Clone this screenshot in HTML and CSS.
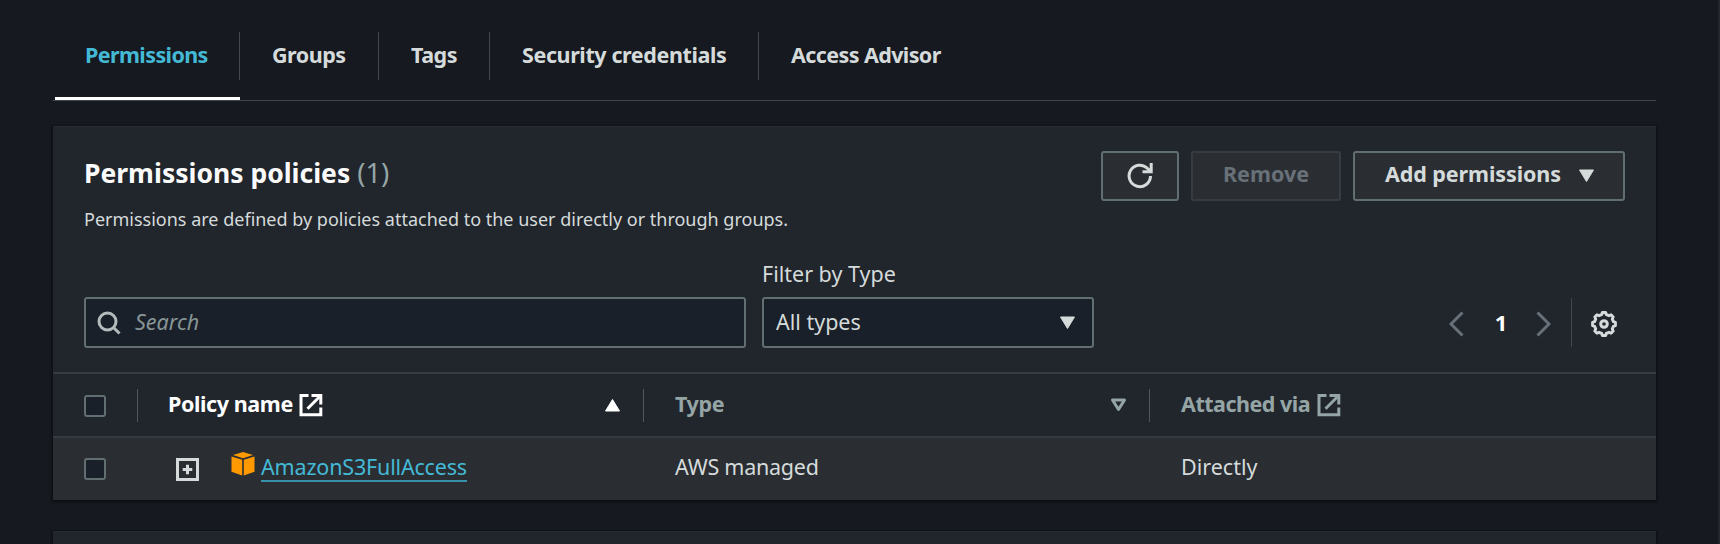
FILE: index.html
```html
<!DOCTYPE html>
<html lang="en">
<head>
<meta charset="utf-8">
<title>Permissions</title>
<link rel="stylesheet" href="styles.css">
</head>
<body>
<main class="page">
  <nav class="tabs">
    <a class="tab tab-active"><span class="ls-7">Permissions</span></a>
    <a class="tab"><span class="ls-5">Groups</span></a>
    <a class="tab"><span class="ls-5">Tags</span></a>
    <a class="tab"><span class="ls-4">Security credentials</span></a>
    <a class="tab"><span class="ls-6">Access Advisor</span></a>
  </nav>

  <section class="panel">
    <header class="panel-head">
      <div class="headings">
        <h2 class="title">Permissions policies <span class="count">(1)</span></h2>
        <p class="description">Permissions are defined by policies attached to the user directly or through groups.</p>
      </div>
      <div class="actions">
        <button class="btn btn-icon" aria-label="Refresh">
          <svg width="26" height="26" viewBox="0 0 26 26" fill="none" stroke="currentColor" stroke-width="3"><path d="M23.500 13A10.700 10.700 0 1 1 20.300 5.300L23 8"/><path d="M24.200 0V8.700H15.500"/><path d="M19.500 8.500L24 4v4.500z" fill="currentColor" stroke="none"/></svg>
        </button>
        <button class="btn btn-disabled">Remove</button>
        <button class="btn btn-menu">Add permissions
          <svg class="caret" width="17" height="14" viewBox="0 0 17 14"><path d="M1.500 1h14L8.500 12.500z" fill="currentColor" stroke="currentColor" stroke-linejoin="round"/></svg>
        </button>
      </div>
    </header>

    <div class="filters">
      <div class="search">
        <svg width="24" height="24" viewBox="0 0 24 24" fill="none" stroke="currentColor" stroke-width="3"><circle cx="10.500" cy="10.500" r="8.500"/><path d="M16.500 16.500l6 6"/></svg>
        <span class="placeholder">Search</span>
      </div>
      <div class="filter">
        <label class="filter-label">Filter by Type</label>
        <div class="select"><span>All types</span>
          <svg width="17" height="14" viewBox="0 0 17 14"><path d="M1.500 1h14L8.500 12.500z" fill="currentColor" stroke="currentColor" stroke-linejoin="round"/></svg>
        </div>
      </div>
      <div class="pager">
        <svg class="chevron" width="15" height="26" viewBox="0 0 15 26" fill="none" stroke="currentColor" stroke-width="3"><path d="M13.500 1.500L2 13l11.500 11.500"/></svg>
        <span class="page-number">1</span>
        <svg class="chevron" width="15" height="26" viewBox="0 0 15 26" fill="none" stroke="currentColor" stroke-width="3"><path d="M1.500 1.500L13 13 1.500 24.500"/></svg>
        <span class="pager-divider"></span>
        <svg class="gear" width="26" height="26" viewBox="0 0 26 26" fill="none" stroke="currentColor" stroke-width="3" stroke-linejoin="round"><path d="M10.700 3.600L11.400 1.600h3.200l.7 2L18 4.700l2-.9 2.200 2.200-.9 2 1.100 2.700 2 .7v3.200l-2 .7-1.100 2.700.9 2-2.200 2.200-2-.9-2.700 1.100-.7 2h-3.200l-.7-2L8 21.300l-2 .9L3.800 20l.9-2-1.100-2.700-2-.7v-3.200l2-.7L4.700 8l-.9-2L6 3.800l2 .9z"/><circle cx="13" cy="13" r="3.300"/></svg>
      </div>
    </div>

    <div class="table">
      <div class="row row-head">
        <div class="cell cell-check"><span class="checkbox"></span></div>
        <div class="cell cell-name sorted"><span class="ls-4">Policy name</span>
          <svg class="external" width="24" height="24" viewBox="0 0 24 24" fill="none" stroke="currentColor" stroke-width="3"><path d="M9.500 2.500H2v19.300h19.800V14.500"/><path d="M12.500 2.500h9.300v9"/><path d="M21.500 2.700L8.500 15.700"/></svg>
          <svg class="sort" width="17" height="14" viewBox="0 0 17 14"><path d="M1.500 13h14L8.500 1.500z" fill="currentColor" stroke="currentColor" stroke-linejoin="round"/></svg>
        </div>
        <div class="cell cell-type"><span class="type-label ls-4">Type</span>
          <svg class="sort" width="17" height="14" viewBox="0 0 17 14" fill="none" stroke="currentColor" stroke-width="3" stroke-linejoin="round"><path d="M2.500 2h12L8.500 11.500z"/></svg>
        </div>
        <div class="cell cell-via"><span class="ls-5">Attached via</span>
          <svg class="external external-via" width="24" height="24" viewBox="0 0 24 24" fill="none" stroke="currentColor" stroke-width="3"><path d="M9.500 2.500H2v19.300h19.800V14.500"/><path d="M12.500 2.500h9.300v9"/><path d="M21.500 2.700L8.500 15.700"/></svg>
        </div>
      </div>
      <div class="row row-body">
        <div class="cell cell-check"><span class="checkbox"></span></div>
        <div class="cell cell-name">
          <svg class="expander" width="23" height="23" viewBox="0 0 23 23" fill="none" stroke="currentColor" stroke-width="3"><rect x="1.500" y="1.500" width="20" height="20"/><path d="M11.500 6.700v9.600M6.700 11.500h9.600"/></svg>
          <svg class="cube" width="24" height="24" viewBox="0 0 24 24" fill="#ff9900"><path d="M12 0l10 3.100L12 6.200 2 3.100z"/><path d="M.5 4.600l10.700 3.200V23.600L.5 19.800zM23.500 4.600L12.800 7.800v15.800l10.700-3.800z"/></svg>
          <a class="policy-link">AmazonS3FullAccess</a>
        </div>
        <div class="cell cell-type"><span class="ls-2">AWS managed</span></div>
        <div class="cell cell-via"><span>Directly</span></div>
      </div>
    </div>
  </section>

  <section class="panel panel-next"></section>
</main>
</body>
</html>
```
FILE: styles.css
```css
* { box-sizing: border-box; }
html { background: #16191f; }
body {
  margin: 0;
  height: 544px;
  background: #16191f;
  color: #d5dbdb;
  font: 21.5px/44px "Noto Sans", "Open Sans", sans-serif;
}
svg { display: block; flex: none; }
.page {
  height: 544px;
  padding: 0 62px 0 53px;
  border-right: 2px solid #24282d;
}

.ls-2 { letter-spacing: -0.24px; }
.ls-4 { letter-spacing: -0.4px; }
.ls-5 { letter-spacing: -0.5px; }
.ls-6 { letter-spacing: -0.6px; }
.ls-7 { letter-spacing: -0.6px; }

/* Tabs */
.tabs {
  display: flex;
  height: 101px;
  padding: 32px 0 0 2px;
  border-bottom: 1px solid #414750;
}
.tab {
  height: 68px;
  padding-left: 32px;
  line-height: 45px;
  font-weight: 700;
  background: linear-gradient(#414750, #414750) right top / 1px 48px no-repeat;
}
.tab:nth-child(1) { width: 185px; padding-left: 30px; }
.tab:nth-child(2) { width: 139px; }
.tab:nth-child(3) { width: 111px; }
.tab:nth-child(4) { width: 269px; }
.tab:last-child { background: none; }
.tab-active { color: #44b9d6; border-bottom: 3px solid #fff; }

/* Panels */
.panel {
  height: 374px;
  margin-top: 25px;
  background: #21252c;
  border-top: 1px solid #282c32;
  box-shadow: 0 1px 2px 1px #0c0f13;
}
.panel-next { height: 13px; margin-top: 31px; box-shadow: 0 0 2px 1px #0c0f13; clip-path: inset(-1px -3px 0 -3px); }
.panel-head {
  display: flex;
  justify-content: space-between;
  height: 130px;
  padding: 24px 31px 0;
}
.title {
  margin: 0;
  color: #fafafa;
  font-size: 26.5px;
  line-height: 45px;
  white-space: nowrap;
}
.count { color: #95a5a6; font-weight: 400; font-size: 27.5px; line-height: 1; }
.description { margin: 7px 0 0; font-size: 18px; line-height: 32px; }

/* Buttons */
.actions { display: flex; gap: 12px; }
.btn {
  display: flex;
  align-items: center;
  justify-content: center;
  width: 150px;
  height: 50px;
  padding: 0 0 4px;
  border: 2px solid #616f70;
  border-radius: 3px;
  background: #2a2e33;
  color: #d5dbdb;
  font: inherit;
  font-weight: 700;
}
.btn-icon { width: 78px; padding: 0; }
.btn-disabled { border-color: #373c44; color: #687078; }
.btn-menu { width: 272px; gap: 17px; padding-left: 2px; letter-spacing: -0.1px; }
.caret { margin-top: 4px; }

/* Filter bar */
.filters { display: flex; align-items: flex-end; height: 91px; padding-left: 31px; }
.search, .select {
  display: flex;
  align-items: center;
  height: 51px;
  padding: 0 11px;
  border: 2px solid #616f70;
  border-radius: 3px;
  background: #1a2029;
}
.search { width: 662px; color: #b3bcbc; }
.placeholder {
  margin: -2px 0 0 14px;
  color: #879596;
  font-style: italic;
}
.filter { width: 332px; margin-left: 16px; }
.filter-label { display: block; line-height: 45px; height: 46px; }
.select { justify-content: space-between; padding: 0 16px 0 12px; }
.select span { margin-top: -1px; }
.pager { display: flex; align-items: center; height: 51px; margin-left: 355px; color: #687078; }
.chevron { margin-top: 2px; }
.page-number { width: 72px; padding-left: 2px; margin-top: -2px; text-align: center; color: #fff; font-weight: 700; font-size: 22px; }
.pager-divider { width: 1px; height: 49px; margin: 0 19px 0 20px; background: #414750; }
.gear { margin-top: 2px; color: #d5dbdb; }

/* Table */
.table { margin-top: 24px; }
.row { display: flex; height: 64px; border-top: 2px solid #363b43; }
.cell { display: flex; align-items: center; }
.row-head { color: #95a5a6; font-weight: 700; }
.row-head .cell:not(.cell-via) {
  background: linear-gradient(#50565f, #50565f) right center / 1px 33px no-repeat;
}
.row-head .cell > span:not(.checkbox) { margin-top: -3px; }
.row-head .type-label { padding-top: 1px; }
.row-body { background: #2a2e33; }
.row-body .cell > span:not(.checkbox) { margin-top: -5px; }
.cell-check { width: 85px; padding-left: 31px; }
.checkbox {
  width: 22px;
  height: 22px;
  border: 2px solid #616f70;
  border-radius: 3px;
  background: #1a2029;
}
.row-head .checkbox { margin-top: 1px; }
.row-body .checkbox { margin-top: -1px; }
.cell-name { width: 506px; padding-left: 31px; }
.sorted { padding-left: 30px; color: #fff; }
.external { margin-left: 6px; }
.external-via { margin-left: 7px; }
.sort { margin: 0 23px 0 auto; }
.cell-type { width: 506px; padding-left: 31px; }
.cell-via { padding-left: 31px; }
.expander { margin-left: 7px; }
.cube { margin: -10px 6px 0 32px; }
.policy-link {
  margin-top: -3px;
  border-bottom: 2px solid #3791aa;
  color: #44b9d6;
  line-height: 26px;
  letter-spacing: -0.17px;
}
```
